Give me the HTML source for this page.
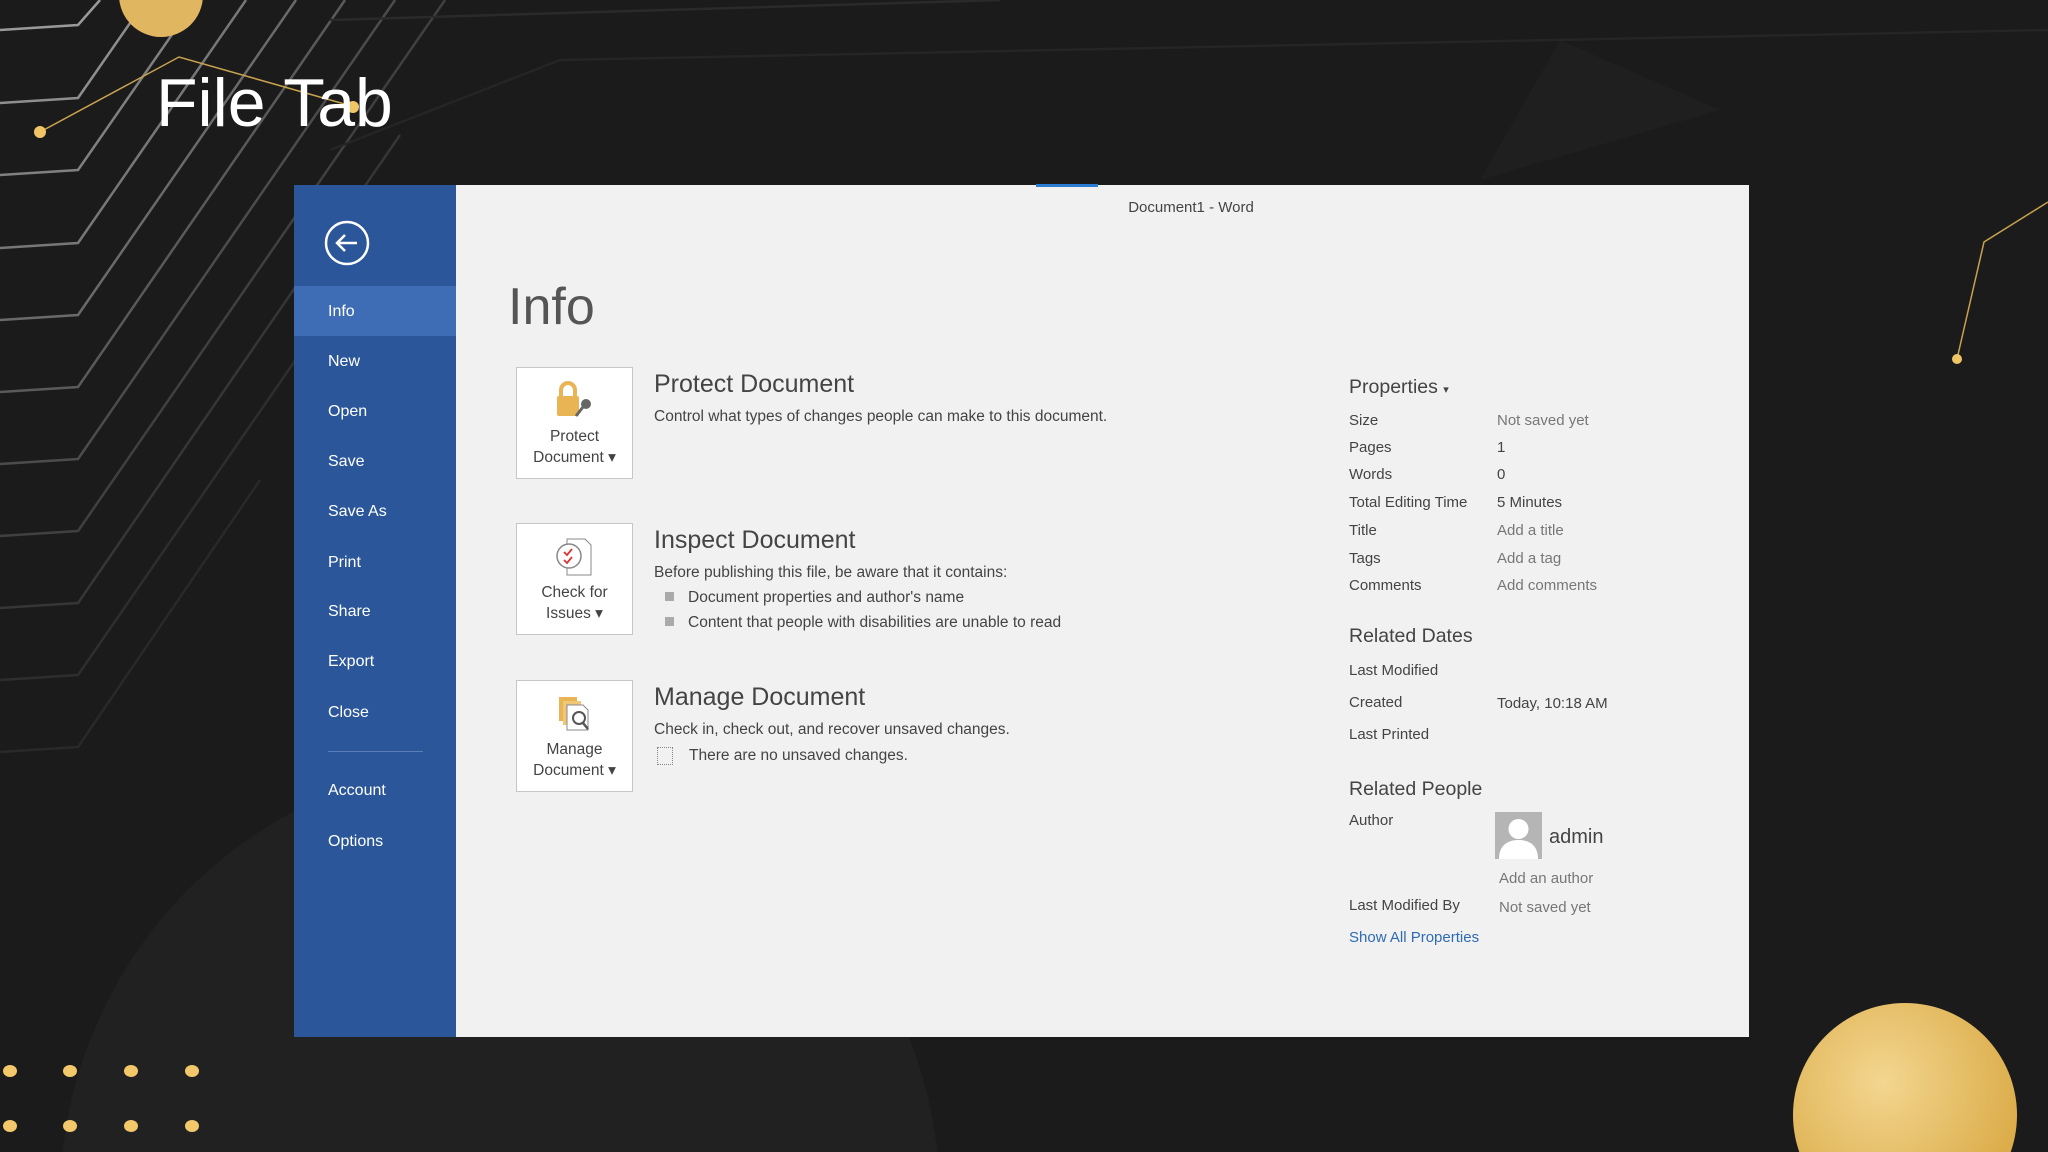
<!DOCTYPE html>
<html style="overflow:hidden"><head><meta charset="utf-8"><style>
*{margin:0;padding:0;box-sizing:border-box}
body{width:2048px;height:1152px;overflow:hidden;background:#1b1b1b;font-family:"Liberation Sans",sans-serif;position:relative}
.a{position:absolute;white-space:nowrap}
#side{position:absolute;left:294px;top:185px;width:162px;height:852px;background:#2b579a}
#panel{position:absolute;left:456px;top:185px;width:1293px;height:852px;background:#f1f1f1}
.mi{position:absolute;left:34px;color:#fff;font-size:16px}
.box{position:absolute;width:117px;height:112px;background:#fff;border:1px solid #c6c6c6;text-align:center;font-size:15.5px;color:#444;line-height:21px}
.h{position:absolute;font-size:25px;color:#444}
.d{position:absolute;font-size:15.5px;color:#444}
.pl{position:absolute;left:893px;font-size:15px;color:#444}
.pv{position:absolute;left:1041px;font-size:15px;color:#777}
.ph{position:absolute;left:893px;font-size:19.5px;color:#444}
.bul{position:absolute;left:209px;width:9px;height:9px;background:#aaa}
</style></head><body>
<svg class="a" style="left:0;top:0" width="2048" height="1152">
 <circle cx="500" cy="1200" r="440" fill="#212121"/>
 <path d="M1480 180 L1560 40 L1720 110 Z" fill="#1f1f1f"/>
 <g fill="none" stroke-width="2.5">
  <polyline points="0,30 78,25 100,0" stroke="#9a9a9a"/>
  <polyline points="0,103 78,98 146,0" stroke="#8e8e8e"/>
  <polyline points="0,175 78,170 196,0" stroke="#808080"/>
  <polyline points="0,248 78,243 246,0" stroke="#777"/>
  <polyline points="0,320 78,315 296,0" stroke="#6a6a6a"/>
  <polyline points="0,392 78,387 345,0" stroke="#5a5a5a"/>
  <polyline points="0,464 78,459 395,0" stroke="#4c4c4c"/>
  <polyline points="0,536 78,531 445,0" stroke="#404040"/>
  <polyline points="0,608 78,603 400,135" stroke="#363636"/>
  <polyline points="0,680 78,675 330,310" stroke="#2e2e2e"/>
  <polyline points="0,752 78,747 260,480" stroke="#292929"/>
  <polyline points="330,20 1000,0" stroke="#2a2a2a"/>
  <polyline points="330,150 560,60 2048,30" stroke="#252525"/>
 </g>
 <circle cx="161" cy="-5" r="42" fill="#e0b760"/>
 <polyline points="40,132 179,57 355,107" fill="none" stroke="#c9a24e" stroke-width="1.5"/>
 <circle cx="40" cy="132" r="6" fill="#f0c565"/>
 <circle cx="353" cy="107" r="6" fill="#f0c565"/>
 <polyline points="2048,202 1984,242 1957,359" fill="none" stroke="#c9a24e" stroke-width="1.5"/>
 <circle cx="1957" cy="359" r="5" fill="#f0c565"/>
 <g fill="#f2c86a">
  <ellipse cx="10" cy="1071" rx="7" ry="6"/><ellipse cx="70" cy="1071" rx="7" ry="6"/><ellipse cx="131" cy="1071" rx="7" ry="6"/><ellipse cx="192" cy="1071" rx="7" ry="6"/>
  <ellipse cx="10" cy="1126" rx="7" ry="6"/><ellipse cx="70" cy="1126" rx="7" ry="6"/><ellipse cx="131" cy="1126" rx="7" ry="6"/><ellipse cx="192" cy="1126" rx="7" ry="6"/>
 </g>
 <defs><radialGradient id="g" cx="0.4" cy="0.35" r="0.7"><stop offset="0" stop-color="#f3d690"/><stop offset="1" stop-color="#d9a842"/></radialGradient></defs>
 <circle cx="1905" cy="1115" r="112" fill="url(#g)"/>
</svg>
<div class="a" style="left:156px;top:64px;font-size:68px;color:#fff">File Tab</div>

<div id="side">
 <svg class="a" style="left:30px;top:35px" width="46" height="46"><circle cx="23" cy="23" r="21" fill="none" stroke="#fff" stroke-width="2.5"/><path d="M33 23H13M21 15l-8 8 8 8" fill="none" stroke="#fff" stroke-width="2.5"/></svg>
 <div class="a" style="left:0;top:101px;width:162px;height:50px;background:#3e6db5"></div>
 <div class="mi" style="top:118px">Info</div>
 <div class="mi" style="top:168px">New</div>
 <div class="mi" style="top:218px">Open</div>
 <div class="mi" style="top:268px">Save</div>
 <div class="mi" style="top:318px">Save As</div>
 <div class="mi" style="top:369px">Print</div>
 <div class="mi" style="top:418px">Share</div>
 <div class="mi" style="top:468px">Export</div>
 <div class="mi" style="top:519px">Close</div>
 <div class="a" style="left:34px;top:566px;width:95px;height:1px;background:#5a7fb8"></div>
 <div class="mi" style="top:597px">Account</div>
 <div class="mi" style="top:648px">Options</div>
</div>

<div id="panel">
 <div class="a" style="left:580px;top:-1px;width:62px;height:3px;background:#2b7cd3"></div>
 <div class="a" style="left:735px;top:14px;transform:translateX(-50%);font-size:15px;color:#444">Document1 - Word</div>
 <div class="a" style="left:52px;top:92px;font-size:52px;color:#555">Info</div>

 <div class="box" style="left:60px;top:182px">
  <svg style="margin-top:12px" width="44" height="40"><rect x="4" y="16" width="22" height="20" rx="2" fill="#e8b454"/><path d="M8 17V10a7 7 0 0 1 14 0v7" fill="none" stroke="#e8b454" stroke-width="4"/><circle cx="33" cy="24" r="5" fill="#666"/><path d="M30 27l-7 9" stroke="#666" stroke-width="3"/></svg>
  <div>Protect<br>Document ▾</div></div>
 <div class="h" style="left:198px;top:185px">Protect Document</div>
 <div class="d" style="left:198px;top:223px">Control what types of changes people can make to this document.</div>

 <div class="box" style="left:60px;top:338px">
  <svg style="margin-top:12px" width="44" height="40"><path d="M14 3h18l6 6v30H14z" fill="#fff" stroke="#888"/><circle cx="16" cy="20" r="12" fill="#fff" stroke="#888" stroke-width="1.5"/><path d="M11 16l3 3 5-6M11 24l3 3 5-6" fill="none" stroke="#d33" stroke-width="1.8"/></svg>
  <div>Check for<br>Issues ▾</div></div>
 <div class="h" style="left:198px;top:341px">Inspect Document</div>
 <div class="d" style="left:198px;top:379px">Before publishing this file, be aware that it contains:</div>
 <div class="bul" style="top:407px"></div><div class="d" style="left:232px;top:404px">Document properties and author's name</div>
 <div class="bul" style="top:432px"></div><div class="d" style="left:232px;top:429px">Content that people with disabilities are unable to read</div>

 <div class="box" style="left:60px;top:495px">
  <svg style="margin-top:12px" width="44" height="40"><rect x="6" y="4" width="18" height="24" fill="#e8b454"/><rect x="10" y="8" width="18" height="24" fill="#f0c777"/><path d="M14 12h16l5 5v20H14z" fill="#fff" stroke="#888"/><circle cx="26" cy="25" r="6" fill="none" stroke="#555" stroke-width="2"/><path d="M30 30l5 6" stroke="#555" stroke-width="2.5"/></svg>
  <div>Manage<br>Document ▾</div></div>
 <div class="h" style="left:198px;top:498px">Manage Document</div>
 <div class="d" style="left:198px;top:536px">Check in, check out, and recover unsaved changes.</div>
 <div class="a" style="left:201px;top:562px;width:16px;height:18px;border:1px dotted #888"></div>
 <div class="d" style="left:233px;top:562px">There are no unsaved changes.</div>

 <div class="ph" style="top:191px">Properties <span style="font-size:11px">▾</span></div>
 <div class="pl" style="top:227px">Size</div><div class="pv" style="top:227px">Not saved yet</div>
 <div class="pl" style="top:254px">Pages</div><div class="pv" style="top:254px;color:#444">1</div>
 <div class="pl" style="top:281px">Words</div><div class="pv" style="top:281px;color:#444">0</div>
 <div class="pl" style="top:309px">Total Editing Time</div><div class="pv" style="top:309px;color:#444">5 Minutes</div>
 <div class="pl" style="top:337px">Title</div><div class="pv" style="top:337px">Add a title</div>
 <div class="pl" style="top:365px">Tags</div><div class="pv" style="top:365px">Add a tag</div>
 <div class="pl" style="top:392px">Comments</div><div class="pv" style="top:392px">Add comments</div>
 <div class="ph" style="top:440px">Related Dates</div>
 <div class="pl" style="top:477px">Last Modified</div>
 <div class="pl" style="top:509px">Created</div><div class="pv" style="top:510px;color:#444">Today, 10:18 AM</div>
 <div class="pl" style="top:541px">Last Printed</div>
 <div class="ph" style="top:593px">Related People</div>
 <div class="pl" style="top:627px">Author</div>
 <svg class="a" style="left:1039px;top:627px" width="47" height="47"><rect width="47" height="47" fill="#b5b5b5"/><circle cx="23.5" cy="17" r="10" fill="#fff"/><path d="M4 47c0-14 9-19 19.5-19S43 33 43 47z" fill="#fff"/></svg>
 <div class="a" style="left:1093px;top:641px;font-size:20px;color:#444">admin</div>
 <div class="pv" style="left:1043px;top:685px">Add an author</div>
 <div class="pl" style="top:712px">Last Modified By</div><div class="pv" style="left:1043px;top:714px">Not saved yet</div>
 <div class="pl" style="top:744px;color:#2e6bb5">Show All Properties</div>
</div>
</body></html>
